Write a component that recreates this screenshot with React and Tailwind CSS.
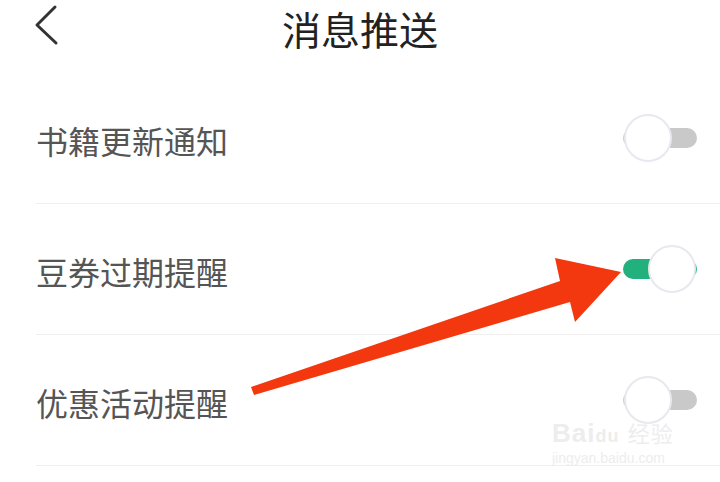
import { useState } from 'react'

const rows = [
    { id: 'book', label: '书籍更新通知', on: false },
    { id: 'coupon', label: '豆券过期提醒', on: true },
    { id: 'promo', label: '优惠活动提醒', on: false },
]

function Toggle({ on, onChange }) {
    return (
        <button onClick={onChange} className="relative w-[74px] h-[48px] shrink-0">
            <span className={`absolute left-0 right-0 top-[14px] h-[20px] rounded-full ${on ? 'bg-[#22b07d]' : 'bg-[#c9c9c9]'}`} />
            <span className={`absolute top-0 w-[48px] h-[48px] rounded-full bg-white border-2 border-[#e8e8ee] ${on ? 'left-[25px]' : 'left-[1px]'}`} />
        </button>
    )
}

export default function App() {
    const [settings, setSettings] = useState(rows)

    const flip = (id) => setSettings(s => s.map(r => r.id === id ? { ...r, on: !r.on } : r))

    return (
        <div className="relative w-[720px] h-[482px] bg-white overflow-hidden font-['Noto_Sans_CJK_SC','Noto_Sans',sans-serif]">
            <header className="h-[73px] grid grid-cols-[1fr_auto_1fr] items-start pt-[4px]">
                <button className="ml-[30px] w-[34px] h-[42px]">
                    <svg width="34" height="42" viewBox="0 0 34 42">
                        <path d="M25 3 L7 21 L26 39" fill="none" stroke="#333" strokeWidth="3" strokeLinecap="round" strokeLinejoin="round" />
                    </svg>
                </button>
                <h1 className="text-[39px] leading-[48px] text-[#222]">消息推送</h1>
                <div />
            </header>

            <div className="ml-[36px]">
                {settings.map(r => (
                    <div key={r.id} className="h-[131px] flex items-center justify-between border-b border-[#efefef] pr-[23px]">
                        <span className="text-[32px] text-[#555] pt-[3px]">{r.label}</span>
                        <Toggle on={r.on} onChange={() => flip(r.id)} />
                    </div>
                ))}
            </div>

            {/* watermark */}
            <div className="absolute left-[552px] top-[418px] pointer-events-none text-[#ededed] font-['Liberation_Sans',sans-serif]">
                <div className="text-[26px] leading-[28px] font-bold tracking-[1px]">Bai<span className="text-[18px]">du</span> <span className="font-['Noto_Sans_CJK_SC',sans-serif] text-[22px] font-normal">经验</span></div>
                <div className="text-[14px] leading-[16px]">jingyan.baidu.com</div>
            </div>

            {/* arrow annotation */}
            <svg className="absolute inset-0 pointer-events-none" width="720" height="482" viewBox="0 0 720 482">
                <polygon points="251,387 560,281 555,258 621,272 575,322 570,302 254,395" fill="#f3380f" />
            </svg>
        </div>
    )
}
